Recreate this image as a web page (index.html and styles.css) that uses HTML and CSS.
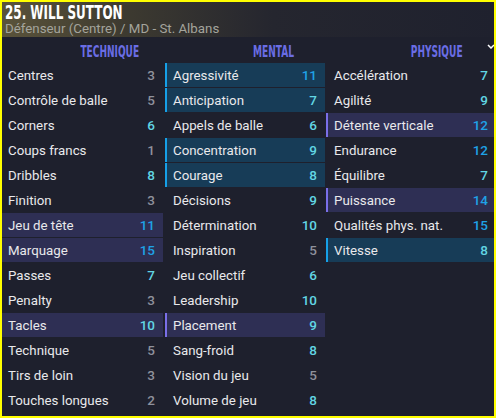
FILE: index.html
```html
<!DOCTYPE html>
<html lang="fr">
<head>
  <meta charset="UTF-8">
  <title>Will Sutton - Attributs</title>
  <link rel="stylesheet" href="styles.css">
</head>
<body>

  <div class="panel">

    <!-- Player header -->
    <div class="player-head">
      <h1><span>25. WILL SUTTON</span></h1>
      <p>Défenseur (Centre) / MD - St. Albans</p>
    </div>

    <!-- Attributes -->
    <div class="attrs">

      <div class="col col-tech">
        <h2><span>TECHNIQUE</span></h2>
        <div class="row"><span>Centres</span><b class="low">3</b></div>
        <div class="row"><span>Contrôle de balle</span><b class="low">5</b></div>
        <div class="row"><span>Corners</span><b class="mid">6</b></div>
        <div class="row"><span>Coups francs</span><b class="low">1</b></div>
        <div class="row"><span>Dribbles</span><b class="mid">8</b></div>
        <div class="row"><span>Finition</span><b class="low">3</b></div>
        <div class="row purple"><span>Jeu de tête</span><b class="high">11</b></div>
        <div class="row purple"><span>Marquage</span><b class="high">15</b></div>
        <div class="row"><span>Passes</span><b class="mid">7</b></div>
        <div class="row"><span>Penalty</span><b class="low">3</b></div>
        <div class="row purple"><span>Tacles</span><b class="mid">10</b></div>
        <div class="row"><span>Technique</span><b class="low">5</b></div>
        <div class="row"><span>Tirs de loin</span><b class="low">3</b></div>
        <div class="row"><span>Touches longues</span><b class="low">2</b></div>
      </div>

      <div class="col col-mental">
        <h2><span>MENTAL</span></h2>
        <div class="row blue"><span>Agressivité</span><b class="high">11</b></div>
        <div class="row blue"><span>Anticipation</span><b class="mid">7</b></div>
        <div class="row"><span>Appels de balle</span><b class="mid">6</b></div>
        <div class="row blue"><span>Concentration</span><b class="mid">9</b></div>
        <div class="row blue"><span>Courage</span><b class="mid">8</b></div>
        <div class="row"><span>Décisions</span><b class="mid">9</b></div>
        <div class="row"><span>Détermination</span><b class="mid">10</b></div>
        <div class="row"><span>Inspiration</span><b class="low">5</b></div>
        <div class="row"><span>Jeu collectif</span><b class="mid">6</b></div>
        <div class="row"><span>Leadership</span><b class="mid">10</b></div>
        <div class="row purple"><span>Placement</span><b class="mid">9</b></div>
        <div class="row"><span>Sang-froid</span><b class="mid">8</b></div>
        <div class="row"><span>Vision du jeu</span><b class="low">5</b></div>
        <div class="row"><span>Volume de jeu</span><b class="mid">8</b></div>
      </div>

      <div class="col col-phys">
        <h2><span>PHYSIQUE</span></h2>
        <span class="chevron">
          <svg width="8" height="5" viewBox="0 0 8 5"><path d="M1 1 L4 4 L7 1" fill="none" stroke="#fff" stroke-width="1.5"/></svg>
        </span>
        <div class="row"><span>Accélération</span><b class="mid">7</b></div>
        <div class="row"><span>Agilité</span><b class="mid">9</b></div>
        <div class="row purple"><span>Détente verticale</span><b class="high">12</b></div>
        <div class="row"><span>Endurance</span><b class="high">12</b></div>
        <div class="row"><span>Équilibre</span><b class="mid">7</b></div>
        <div class="row purple"><span>Puissance</span><b class="high">14</b></div>
        <div class="row"><span>Qualités phys. nat.</span><b class="high">15</b></div>
        <div class="row blue"><span>Vitesse</span><b class="mid">8</b></div>
      </div>

    </div>
  </div>

</body>
</html>
```

FILE: styles.css
```css
body {
  margin: 0;
  padding: 0;
  background: #1e202d;
  font-family: Roboto, "Noto Sans", sans-serif;
}

.panel {
  width: 496px;
  height: 418px;
  box-sizing: border-box;
  border: 2px solid #ffff00;
  background: #1e202d;
  overflow: hidden;
}

/* Header */
.player-head {
  height: 35px;
  padding: 0 3px;
  box-sizing: border-box;
  background: linear-gradient(to right, #5a533a 0%, #3d3a30 25%, #25262f 55%, #1f212e 100%);
}

.player-head h1 {
  margin: 0;
  height: 20px;
  font-family: "DejaVu Sans Condensed", "DejaVu Sans", sans-serif;
  font-stretch: condensed;
  font-weight: bold;
  font-size: 19px;
  line-height: 20px;
  color: #ffffff;
  white-space: nowrap;
}

.player-head h1 span {
  display: inline-block;
  transform: scaleX(0.7);
  transform-origin: left center;
}

.player-head p {
  margin: 0;
  font-size: 13.3px;
  line-height: 14px;
  color: #a4a49c;
  white-space: nowrap;
}

/* Attribute columns */
.attrs {
  display: grid;
  grid-template-columns: 161px 161px 1fr;
  column-gap: 1px;
}

.col {
  position: relative;
}

.col-mental {
  margin-left: 1px;
}

.col h2 {
  margin: 0;
  height: 26px;
  padding-top: 5px;
  box-sizing: border-box;
  line-height: 21px;
  text-align: center;
  font-family: "DejaVu Sans Condensed", "DejaVu Sans", sans-serif;
  font-stretch: condensed;
  font-weight: bold;
  font-size: 15px;
  color: #6a6de4;
  white-space: nowrap;
}

.col h2 span {
  display: inline-block;
  transform: scaleX(0.67);
}

.col-tech h2 {
  padding-left: 55px;
}

.col-mental h2 {
  padding-left: 58px;
}

.col-phys h2 {
  padding-left: 54px;
}

.chevron {
  position: absolute;
  top: 7px;
  right: -1px;
}

.chevron svg {
  display: block;
}

.row {
  display: flex;
  justify-content: space-between;
  align-items: center;
  height: 24px;
  margin-bottom: 1px;
  padding: 0 8px 0 6px;
  border-left: 2px solid transparent;
  font-size: 13.3px;
  color: #e9e9ec;
}

.col-tech .row {
  border-left: none;
  padding-right: 8px;
}

.col-phys .row {
  padding-right: 6px;
}

.row.blue {
  background: #173c57;
  border-left-color: #16a0e8;
}

.row.purple {
  background: #2e2f54;
  border-left-color: #7a6fe8;
}

.row b {
  font-weight: 500;
  font-size: 13.5px;
}

.low {
  color: #8f919c;
}

.mid {
  color: #62d6e4;
}

.high {
  color: #1fa2e6;
}
```
